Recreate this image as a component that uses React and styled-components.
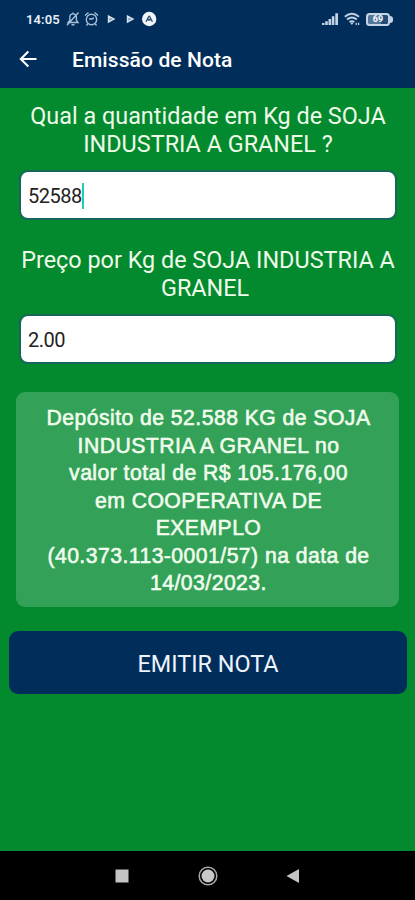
import React from "react";
import styled, { createGlobalStyle } from "styled-components";

const GlobalStyle = createGlobalStyle`
  * { box-sizing: border-box; }
  body { margin: 0; background: #000; }
`;

const Screen = styled.div`
  display: flex;
  flex-direction: column;
  width: 415px;
  height: 900px;
  overflow: hidden;
  background: #048a2e;
  font-family: Roboto, sans-serif;
`;

const StatusBar = styled.div`
  display: flex;
  align-items: center;
  height: 38px;
  padding: 0 22px 0 26px;
  background: #012d5b;
  color: #e6edf5;
`;

const Clock = styled.span`
  width: 34px;
  margin-right: 6px;
  font-size: 13px;
  font-weight: 600;
  letter-spacing: 0.1px;
  white-space: nowrap;
`;

const StatusIcons = styled.div`
  display: flex;
  align-items: center;
`;

const SystemIcons = styled(StatusIcons)`
  gap: 5px;
  margin-left: auto;
`;

const Header = styled.header`
  display: flex;
  align-items: center;
  height: 50px;
  padding: 0 19px 6px;
  background: #012d5b;
  color: #fff;
`;

const BackButton = styled.button`
  display: flex;
  width: 18px;
  height: 18px;
  margin: 0 35px 2px 0;
  padding: 0;
  border: 0;
  background: none;
  color: inherit;
`;

const Title = styled.h1`
  margin: 0;
  font-size: 21px;
  font-weight: 500;
  letter-spacing: 0.1px;
  white-space: nowrap;
`;

const Content = styled.main`
  display: flex;
  flex: 1;
  flex-direction: column;
  padding: 15px 9px 0;
`;

const Label = styled.label`
  display: block;
  margin-bottom: 12px;
  padding-left: 1px;
  color: #eefbe9;
  font-size: 23.4px;
  line-height: 27.5px;
  text-align: center;
  white-space: nowrap;
`;

const Field = styled.div`
  display: flex;
  align-items: center;
  height: 50px;
  margin: 0 9px 27px 10px;
  padding: 2px 7px 0;
  border: 2px solid #14685b;
  border-radius: 9px;
  background: #fff;
  color: #222;
  font-size: 20px;
  letter-spacing: -0.5px;
`;

const Caret = styled.span`
  width: 2px;
  height: 26px;
  background: #20cdb4;
`;

const Summary = styled.section`
  height: 215px;
  margin: 1px 7px 24px;
  padding: 12px 0 0 2px;
  border-radius: 9px;
  background: #33a158;
  color: #f0fcec;
  font-family: "Liberation Sans", Arial, sans-serif;
  font-size: 21.2px;
  line-height: 27.5px;
  letter-spacing: 0.45px;
  text-align: center;
  white-space: nowrap;
  -webkit-text-stroke: 0.6px #f0fcec;
`;

const SubmitButton = styled.button`
  height: 63px;
  margin-right: -1px;
  padding: 3px 0 0;
  border: 0;
  border-radius: 9px;
  background: #012d5b;
  color: #edf4fb;
  font: 400 23.4px Roboto, sans-serif;
`;

const NavBar = styled.nav`
  display: flex;
  align-items: center;
  height: 49px;
  padding: 0 115px;
  background: #000;
  justify-content: space-between;
`;

const NotificationIcons = () => (
  <svg width="92" height="16" viewBox="0 0 92 16" fill="none" stroke="#a6bfd5" strokeWidth="1.4">
    <path d="M2 11.5h10L10.4 9.4V6.2a3.3 3.3 0 0 0-6.6 0v3.2zM5.5 13.8h3M12.5 1.5 1 14.2M7 1.5v1.5" />
    <circle cx="25.5" cy="8.5" r="5.2" />
    <path d="m19 4.5 3.5-3m6 0 3.5 3M23 8h2.8l2-1M21.7 13l-1.2 1.5m8.8-1.5 1.2 1.5" />
    <path d="m42.5 5 5.5 3-5.5 3zM61.5 5l5.5 3-5.5 3z" fill="#8da6bf" stroke="#d7e3ee" />
    <circle cx="83.2" cy="8" r="7.2" fill="#f2f6fa" stroke="none" />
    <path d="m80 10.7 2.7-5.2q.5-.8 1 0l2.7 5.2m-4.6-1.2 1.3-1.3 1.4 1.3" stroke="#345779" />
  </svg>
);

const SignalIcon = () => (
  <svg width="17" height="14" viewBox="0 0 17 14" fill="#c3d4e4">
    <path d="M0 11h2.5v2H0zM3.2 9.3h2.6V13H3.2zM6.5 7h2.6v6H6.5zM9.8 4.2h2.6V13H9.8zM13.3 1.2H16V13h-2.7z" />
  </svg>
);

const WifiIcon = () => (
  <svg width="17" height="14" viewBox="0 0 17 14" fill="none" stroke="#bfd2e3" strokeWidth="1.9">
    <path d="M.8 4.7q7-5.7 14.2 0M3 7.5q4.9-3.8 9.8 0M5.5 10q2.4-1.8 4.8 0" />
    <path d="m6 10.6 1.9 2.4 1.9-2.4z" fill="#bfd2e3" stroke="none" />
    <path d="M12.3 13v-2.3m2.3 2.3v-2.3" strokeWidth="1.3" />
  </svg>
);

const Battery = styled.div`
  display: flex;
  align-items: center;
`;

const BatteryBody = styled.span`
  width: 24px;
  height: 13px;
  border: 2px solid #c6d5e5;
  border-radius: 3.5px;
  background: linear-gradient(90deg, #54779a 65%, #244c75 65%);
  color: #eef4fa;
  font-size: 9px;
  font-weight: 800;
  line-height: 9.5px;
  text-align: center;
`;

const BatteryTip = styled.span`
  width: 3px;
  height: 7px;
  border-radius: 0 3px 3px 0;
  background: #c6d5e5;
`;

export default function App() {
  return (
    <Screen>
      <GlobalStyle />
      <StatusBar>
        <Clock>14:05</Clock>
        <StatusIcons><NotificationIcons /></StatusIcons>
        <SystemIcons>
          <SignalIcon />
          <WifiIcon />
          <Battery><BatteryBody>69</BatteryBody><BatteryTip /></Battery>
        </SystemIcons>
      </StatusBar>
      <Header>
        <BackButton aria-label="Voltar">
          <svg width="18" height="18" viewBox="0 0 18 18" fill="none" stroke="currentColor" strokeWidth="2.1">
            <path d="M17.5 9H2.2M9.3 1.5 1.8 9l7.5 7.5" />
          </svg>
        </BackButton>
        <Title>Emissão de Nota</Title>
      </Header>
      <Content>
        <Label>Qual a quantidade em Kg de SOJA<br />INDUSTRIA A GRANEL ?</Label>
        <Field>52588<Caret /></Field>
        <Label>Preço por Kg de SOJA INDUSTRIA A<br />GRANEL&nbsp;</Label>
        <Field>2.00</Field>
        <Summary>
          Depósito de 52.588 KG de SOJA<br />
          INDUSTRIA A GRANEL no<br />
          valor total de R$ 105.176,00<br />
          em COOPERATIVA DE<br />
          EXEMPLO<br />
          (40.373.113-0001/57) na data de<br />
          14/03/2023.
        </Summary>
        <SubmitButton>EMITIR NOTA</SubmitButton>
      </Content>
      <NavBar>
        <svg width="14" height="14" viewBox="0 0 14 14"><path d="M.5.5h13v13H.5z" fill="#c4c4c4" /></svg>
        <svg width="20" height="20" viewBox="0 0 20 20">
          <circle cx="10" cy="10" r="8.8" fill="none" stroke="#aaa" strokeWidth="1.5" />
          <circle cx="10" cy="10" r="6.5" fill="#c8c8c8" />
        </svg>
        <svg width="14" height="16" viewBox="0 0 14 16"><path d="M13 1v14L.5 8z" fill="#c4c4c4" /></svg>
      </NavBar>
    </Screen>
  );
}
